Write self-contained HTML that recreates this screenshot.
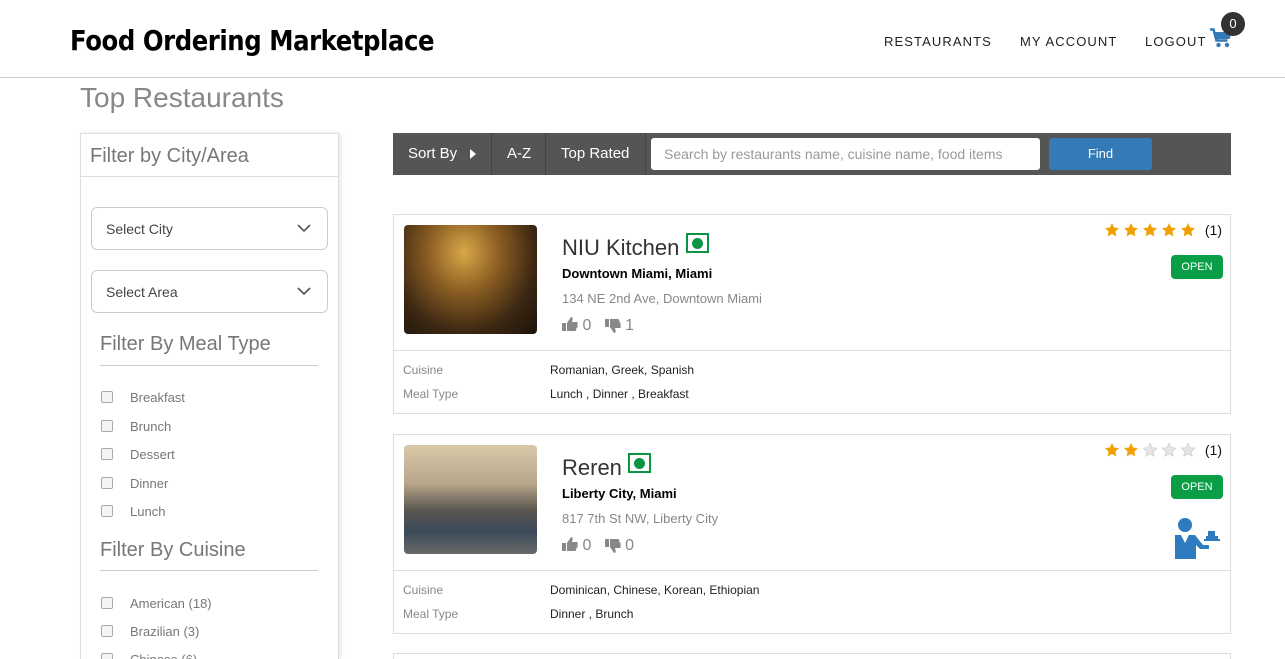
<!DOCTYPE html>
<html><head><meta charset="utf-8">
<style>
*{box-sizing:border-box;margin:0;padding:0}
html,body{width:1285px;height:659px;overflow:hidden}
body{background:#fff;font-family:"Liberation Sans",sans-serif;position:relative;color:#333}
.abs{position:absolute}
.hdr{left:0;top:0;width:1285px;height:78px;border-bottom:1px solid #ccc}
.logo{left:70px;top:24px;font-size:28px;font-weight:bold;color:#000;letter-spacing:-0.5px;font-family:"DejaVu Sans","Liberation Sans",sans-serif;transform:scaleX(0.87);transform-origin:left;white-space:nowrap}
.nav{top:34px;font-size:13px;letter-spacing:1.1px;color:#222}
.title{left:80px;top:82px;font-size:28px;color:#888}
.side{left:80px;top:133px;width:259px;height:526px;border:1px solid #ddd;border-bottom:none;box-shadow:2px 0 4px rgba(0,0,0,.1);overflow:hidden}
.side h3{font-weight:normal;color:#777;font-size:20px}
.sel{position:absolute;left:10px;width:237px;height:43px;border:1px solid #ccc;border-radius:6px;font-size:14px;color:#444;padding:13px 0 0 14px}
.sel svg{position:absolute;right:16px;top:16px}
.cb{position:absolute;left:20px;font-size:13px;color:#777}
.cb i{position:absolute;left:0;top:1px;width:12px;height:12px;border:1px solid #aaa;border-radius:2px;background:#f4f4f4}
.cb span{position:absolute;left:29px;top:0;white-space:nowrap}
.bar{left:393px;top:133px;width:838px;height:42px;background:#555;color:#fff;font-size:15px}
.bar div{position:absolute;top:0;height:42px;line-height:42px}
.sep{width:1px;background:#444}
.card{left:393px;width:838px;height:200px;border:1px solid #ddd}
.img{position:absolute;left:10px;top:10px;width:133px;height:109px;border-radius:4px}
.nm{position:absolute;left:168px;top:18px;font-size:22px;color:#333}
.veg{display:inline-block;width:23px;height:20px;border:2px solid #0a9444;vertical-align:2px;position:relative}
.veg:after{content:"";position:absolute;left:4px;top:3px;width:11px;height:11px;border-radius:50%;background:#0a9444}
.loc{position:absolute;left:168px;top:51px;font-size:13px;font-weight:bold;color:#000}
.adr{position:absolute;left:168px;top:76px;font-size:13px;color:#888}
.th{position:absolute;left:168px;top:102px;font-size:16px;color:#888}
.hr{position:absolute;left:0;top:135px;width:836px;border-top:1px solid #ddd}
.lb{position:absolute;left:9px;font-size:12px;color:#888}
.vl{position:absolute;left:156px;font-size:12px;color:#222}
.open{position:absolute;left:777px;top:40px;width:52px;height:24px;background:#0a9f47;border-radius:4px;color:#fff;font-size:11px;text-align:center;line-height:24px}
.stars{position:absolute;left:711px;top:7px;font-size:14px;color:#111;white-space:nowrap}
.stars svg{vertical-align:-2px;margin-right:1px}
</style></head><body>
<div class="abs hdr"></div>
<div class="abs logo">Food Ordering Marketplace</div>
<div class="abs nav" style="left:884px">RESTAURANTS</div>
<div class="abs nav" style="left:1020px">MY ACCOUNT</div>
<div class="abs nav" style="left:1145px">LOGOUT</div>
<svg class="abs" style="left:1210px;top:28px" width="22" height="20" viewBox="0 0 22 20"><path d="M0 1.5h3.5l3 11h11" fill="none" stroke="#337ab7" stroke-width="2.6"/><path d="M5 4h17l-2.5 7H7z" fill="#337ab7"/><circle cx="8.5" cy="17" r="2.2" fill="#337ab7"/><circle cx="17" cy="17" r="2.2" fill="#337ab7"/></svg>
<div class="abs" style="left:1221px;top:12px;width:24px;height:24px;border-radius:50%;background:#333;color:#fff;font-size:13px;text-align:center;line-height:23px">0</div>
<div class="abs title">Top Restaurants</div>

<div class="abs side">
<h3 style="position:absolute;left:9px;top:11px">Filter by City/Area</h3>
<div style="position:absolute;left:0;top:42px;width:257px;border-top:1px solid #ddd"></div>
<div class="sel" style="top:73px">Select City<svg width="14" height="9"><path d="M1 1l6 6 6-6" fill="none" stroke="#555" stroke-width="1.6"/></svg></div>
<div class="sel" style="top:136px">Select Area<svg width="14" height="9"><path d="M1 1l6 6 6-6" fill="none" stroke="#555" stroke-width="1.6"/></svg></div>
<h3 style="position:absolute;left:19px;top:199px">Filter By Meal Type</h3>
<div style="position:absolute;left:19px;top:231px;width:218px;border-top:1px solid #ccc"></div>
<div class="cb" style="top:256px"><i></i><span>Breakfast</span></div>
<div class="cb" style="top:285px"><i></i><span>Brunch</span></div>
<div class="cb" style="top:313px"><i></i><span>Dessert</span></div>
<div class="cb" style="top:342px"><i></i><span>Dinner</span></div>
<div class="cb" style="top:370px"><i></i><span>Lunch</span></div>
<h3 style="position:absolute;left:19px;top:405px">Filter By Cuisine</h3>
<div style="position:absolute;left:19px;top:436px;width:218px;border-top:1px solid #ccc"></div>
<div class="cb" style="top:462px"><i></i><span>American (18)</span></div>
<div class="cb" style="top:490px"><i></i><span>Brazilian (3)</span></div>
<div class="cb" style="top:518px"><i></i><span>Chinese (6)</span></div>
</div>

<div class="abs bar">
<div style="left:15px">Sort By</div>
<svg class="abs" style="left:77px;top:16px" width="6" height="10"><path d="M0 0l6 5-6 5z" fill="#fff"/></svg>
<div class="sep" style="left:98px"></div>
<div style="left:114px">A-Z</div>
<div class="sep" style="left:152px"></div>
<div style="left:168px">Top Rated</div>
<div class="sep" style="left:252px"></div>
<div style="left:258px;top:5px;height:32px;width:389px;background:#fff;border-radius:3px;color:#999;font-size:14px;line-height:32px;padding-left:13px">Search by restaurants name, cuisine name, food items</div>
<div style="left:656px;top:5px;height:32px;width:103px;background:#337ab7;border-radius:3px;font-size:13px;line-height:32px;text-align:center">Find</div>
</div>

<svg width="0" height="0" style="position:absolute"><defs>
<path id="st" d="M7 0l2.1 4.5 4.9.6-3.6 3.4.9 4.9L7 11 2.7 13.4l.9-4.9L0 5.1l4.9-.6z"/>
</defs></svg>

<div class="abs card" style="top:214px">
<div class="img" style="background:radial-gradient(ellipse at 45% 25%,#d9a849 0%,#8a5d22 35%,#3a2612 70%,#1d130a 100%)"></div>
<div class="nm">NIU Kitchen <span class="veg"></span></div>
<div class="loc">Downtown Miami, Miami</div>
<div class="adr">134 NE 2nd Ave, Downtown Miami</div>
<div class="th"><svg width="16" height="14" style="vertical-align:-1px"><path d="M0 6h4v8H0zM5 6l4-6c2 0 2 2 1 5h5c1 0 1 2 0 2 1 0 1 2 0 2 1 0 1 2-1 2 1 1 0 3-1 3H5z" fill="#888"/></svg> 0 &nbsp;&nbsp;<svg width="16" height="14" style="vertical-align:-3px"><g transform="translate(0,14) scale(1,-1)"><path d="M0 6h4v8H0zM5 6l4-6c2 0 2 2 1 5h5c1 0 1 2 0 2 1 0 1 2 0 2 1 0 1 2-1 2 1 1 0 3-1 3H5z" fill="#888"/></g></svg> 1</div>
<div class="stars"><svg width="95" height="14"><g fill="#f0a000"><use href="#st"/><use href="#st" x="19"/><use href="#st" x="38"/><use href="#st" x="57"/><use href="#st" x="76"/></g></svg> (1)</div>
<div class="open">OPEN</div>
<div class="hr"></div>
<div class="lb" style="top:148px">Cuisine</div><div class="vl" style="top:148px">Romanian, Greek, Spanish</div>
<div class="lb" style="top:172px">Meal Type</div><div class="vl" style="top:172px">Lunch , Dinner , Breakfast</div>
</div>

<div class="abs card" style="top:434px">
<div class="img" style="background:linear-gradient(180deg,#d8c8a8 0%,#b8a78a 35%,#5a5650 60%,#3b4a5a 80%,#6a6a6a 100%)"></div>
<div class="nm">Reren <span class="veg"></span></div>
<div class="loc">Liberty City, Miami</div>
<div class="adr">817 7th St NW, Liberty City</div>
<div class="th"><svg width="16" height="14" style="vertical-align:-1px"><path d="M0 6h4v8H0zM5 6l4-6c2 0 2 2 1 5h5c1 0 1 2 0 2 1 0 1 2 0 2 1 0 1 2-1 2 1 1 0 3-1 3H5z" fill="#888"/></svg> 0 &nbsp;&nbsp;<svg width="16" height="14" style="vertical-align:-3px"><g transform="translate(0,14) scale(1,-1)"><path d="M0 6h4v8H0zM5 6l4-6c2 0 2 2 1 5h5c1 0 1 2 0 2 1 0 1 2 0 2 1 0 1 2-1 2 1 1 0 3-1 3H5z" fill="#888"/></g></svg> 0</div>
<div class="stars"><svg width="95" height="14"><g fill="#f0a000"><use href="#st"/><use href="#st" x="19"/></g><g fill="#e4e4e4" stroke="#ccc" stroke-width=".6"><use href="#st" x="38"/><use href="#st" x="57"/><use href="#st" x="76"/></g></svg> (1)</div>
<div class="open">OPEN</div>
<svg class="abs" style="left:781px;top:82px" width="46" height="42" viewBox="0 0 46 42"><circle cx="10" cy="8" r="7" fill="#2f7bc0"/><path d="M0 18h6l4 8 4-8h6l8 10h6v4h-9l-4-4v14H0z" fill="#2f7bc0"/><path d="M29 22h16v2H29zM31 19h12v3H31zM33 14h7v5h-7z" fill="#2f7bc0"/></svg>
<div class="hr"></div>
<div class="lb" style="top:148px">Cuisine</div><div class="vl" style="top:148px">Dominican, Chinese, Korean, Ethiopian</div>
<div class="lb" style="top:172px">Meal Type</div><div class="vl" style="top:172px">Dinner , Brunch</div>
</div>

<div class="abs" style="left:393px;top:653px;width:838px;height:6px;border:1px solid #ddd;border-bottom:none"></div>
</body></html>
